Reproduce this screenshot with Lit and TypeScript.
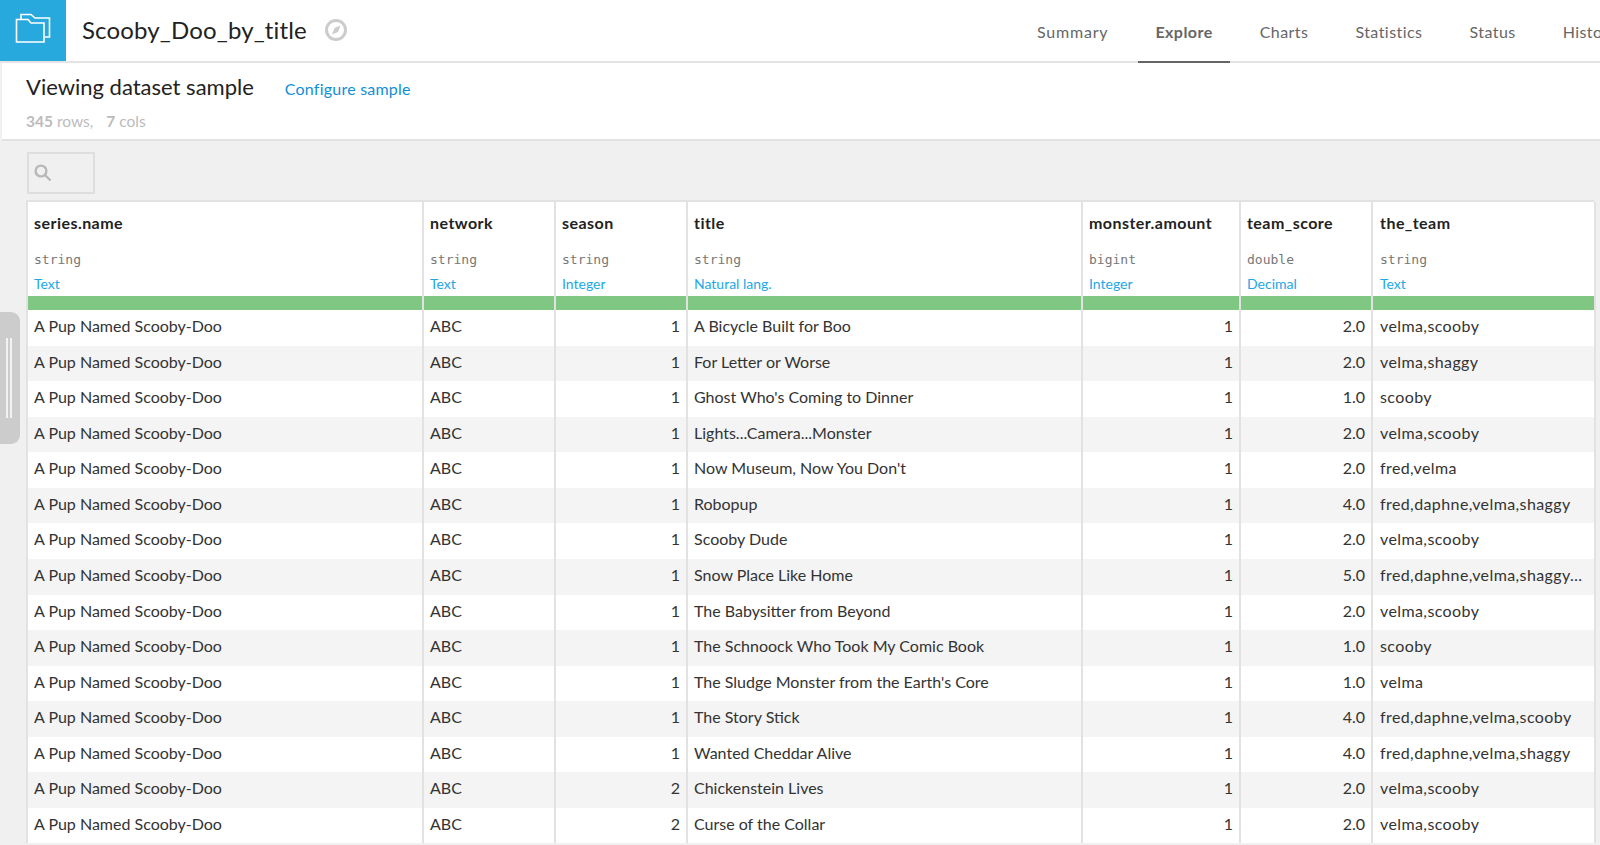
import { LitElement, html, css } from "lit";
import { customElement } from "lit/decorators.js";

const S = "A Pup Named Scooby-Doo";
const rows: [number, string, string, string][] = [
  [1, "A Bicycle Built for Boo", "2.0", "velma,scooby"],
  [1, "For Letter or Worse", "2.0", "velma,shaggy"],
  [1, "Ghost Who's Coming to Dinner", "1.0", "scooby"],
  [1, "Lights...Camera...Monster", "2.0", "velma,scooby"],
  [1, "Now Museum, Now You Don't", "2.0", "fred,velma"],
  [1, "Robopup", "4.0", "fred,daphne,velma,shaggy"],
  [1, "Scooby Dude", "2.0", "velma,scooby"],
  [1, "Snow Place Like Home", "5.0", "fred,daphne,velma,shaggy,scooby"],
  [1, "The Babysitter from Beyond", "2.0", "velma,scooby"],
  [1, "The Schnoock Who Took My Comic Book", "1.0", "scooby"],
  [1, "The Sludge Monster from the Earth's Core", "1.0", "velma"],
  [1, "The Story Stick", "4.0", "fred,daphne,velma,scooby"],
  [1, "Wanted Cheddar Alive", "4.0", "fred,daphne,velma,shaggy"],
  [2, "Chickenstein Lives", "2.0", "velma,scooby"],
  [2, "Curse of the Collar", "2.0", "velma,scooby"],
];
const cols = [
  ["series.name", "string", "Text"],
  ["network", "string", "Text"],
  ["season", "string", "Integer"],
  ["title", "string", "Natural lang."],
  ["monster.amount", "bigint", "Integer"],
  ["team_score", "double", "Decimal"],
  ["the_team", "string", "Text"],
];

@customElement("app-root")
export class AppRoot extends LitElement {
  static styles = css`
    :host { display: block; width: 1600px; height: 845px; overflow: hidden; position: relative; background: #f0f0f0; font-family: "Lato", "Noto Sans", sans-serif; color: #333; }
    .top { display: flex; align-items: stretch; height: 61px; background: #fff; border-bottom: 2px solid #e4e4e4; position: relative; }
    .logo { width: 66px; height: 61px; background: #28a9dd; display: flex; align-items: center; justify-content: center; flex: none; }
    .logo svg { margin-bottom: 5px; }
    .name { margin-left: 16px; font-size: 24px; line-height: 60px; color: #222; letter-spacing: 0.15px; }
    .pin { margin-left: 17px; align-self: center; display: flex; margin-bottom: 2px; }
    .tabs { position: absolute; left: 1020px; top: 0; display: flex; gap: 13px; height: 63px; }
    .tab { padding: 0 17px; font-size: 16px; line-height: 63px; color: #666; box-sizing: border-box; white-space: nowrap; letter-spacing: 0.45px; }
    .tab:first-child { letter-spacing: 0.8px; }
    .tab.on { font-weight: 700; border-bottom: 2px solid #666; color: #666; }
    .sub { background: #fff; height: 76px; border-bottom: 2px solid #e2e2e2; margin-left: 2px; padding: 0 0 0 24px; box-sizing: content-box; }
    .subline { display: flex; align-items: baseline; padding-top: 9px; height: 35px; }
    .subline h2 { margin: 0; font-size: 22px; font-weight: 400; color: #222; line-height: 30px; }
    .subline a { margin-left: 31px; font-size: 16px; color: #0f8fd6; letter-spacing: 0.22px; }
    .stats { margin-top: 4px; font-size: 15.5px; color: #bbb; line-height: 20px; }
    .stats b { font-weight: 700; }
    .stats b + span { margin-right: 9px; }
    .search { margin: 11px 0 0 27px; height: 38px; width: 59px; padding-left: 5px; border: 2px solid #dedede; display: flex; align-items: center; box-sizing: content-box; }
    .table { margin: 6px 0 0 26px; width: 1568px; display: grid; grid-template-columns: 396px 132px 132px 395px 158px 132px 223px; background: #fff; border: 2px solid #e2e2e2; border-bottom: 0; border-right: 0; box-sizing: border-box; }
    .h { grid-row: 1; height: 94px; padding: 11px 7px 0 6px; box-sizing: border-box; border-right: 2px solid #e2e2e2; }
    .h:nth-child(7) { padding-left: 7px; }
    .h .n { font-size: 16px; font-weight: 700; color: #222; line-height: 20px; white-space: nowrap; letter-spacing: 0.45px; }
    .h .t { margin-top: 17px; font: 13px/20px "DejaVu Sans Mono", monospace; color: #777; }
    .h .m { margin-top: 4px; font-size: 14px; line-height: 20px; color: #22a7e6; }
    .g { grid-row: 2; height: 14px; background: #81c784; border-right: 2px solid #e2e2e2; }
    .c { height: 35.57px; line-height: 32px; padding: 0 7px 0 6px; font-size: 16px; color: #333; border-right: 2px solid #e2e2e2; box-sizing: border-box; white-space: nowrap; overflow: hidden; text-overflow: ellipsis; }
    .c.alt { background: #f4f4f4; }
    .c.r { text-align: right; padding-right: 6px; }
    .c.team { letter-spacing: 0.4px; padding: 0 8px 0 7px; }
    .handle { position: absolute; left: 0; top: 312px; width: 20px; height: 132px; background: #ccc; border-radius: 0 9px 9px 0; }
    .handle i { position: absolute; top: 26px; height: 80px; width: 2px; background: #f2f2f2; }
    .handle i.a { left: 6px; }
    .handle i.b { left: 10px; }
  `;

  render() {
    return html`
      <div class="top">
        <div class="logo">
          <svg width="36" height="30" viewBox="0 0 36 30" fill="none" stroke="#fff" stroke-width="1.6">
            <path d="M6 6V1.5H16L20 5H34.5V24H30" />
            <path d="M1.5 29V6.5H13L16 10H29V29z" />
          </svg>
        </div>
        <div class="name">Scooby_Doo_by_title</div>
        <div class="pin">
          <svg width="24" height="24" viewBox="0 0 24 24">
            <circle cx="12" cy="12" r="9.5" fill="none" stroke="#ccc" stroke-width="3" />
            <path d="M16.5 7.5L14 14 8 16.5 10.5 10z" fill="#ccc" />
          </svg>
        </div>
        <div class="tabs">
          ${["Summary", "Explore", "Charts", "Statistics", "Status", "History"].map(
            (t) => html`<div class="tab ${t === "Explore" ? "on" : ""}">${t}</div>`
          )}
        </div>
      </div>
      <div class="sub">
        <div class="subline"><h2>Viewing dataset sample</h2><a>Configure sample</a></div>
        <div class="stats"><b>345</b> <span>rows,</span> <b>7</b> <span>cols</span></div>
      </div>
      <div class="search">
        <svg width="18" height="18" viewBox="0 0 18 18" fill="none" stroke="#b8b8b8" stroke-width="2.4">
          <circle cx="7" cy="7" r="5.4" /><path d="M11 11l5.5 5.5" />
        </svg>
      </div>
      <div class="table">
        ${cols.map(
          (c) => html`<div class="h"><div class="n">${c[0]}</div><div class="t">${c[1]}</div><div class="m">${c[2]}</div></div>`
        )}
        ${cols.map(() => html`<div class="g"></div>`)}
        ${rows.map((r, i) => {
          const a = i % 2 ? "alt" : "";
          return html`
            <div class="c ${a}">${S}</div>
            <div class="c ${a}">ABC</div>
            <div class="c r ${a}">${r[0]}</div>
            <div class="c ${a}">${r[1]}</div>
            <div class="c r ${a}">1</div>
            <div class="c r ${a}">${r[2]}</div>
            <div class="c team ${a}">${r[3]}</div>
          `;
        })}
      </div>
      <div class="handle"><i class="a"></i><i class="b"></i></div>
    `;
  }
}
